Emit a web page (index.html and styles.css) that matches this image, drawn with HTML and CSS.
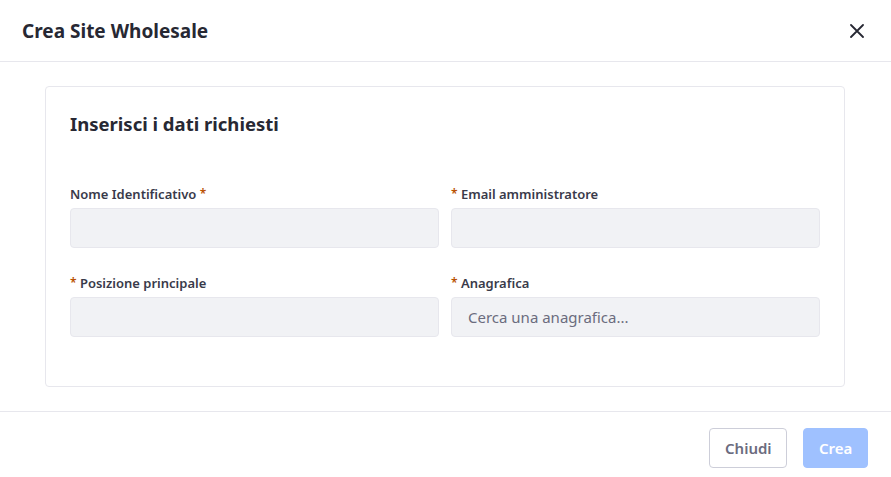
FILE: index.html
```html
<!DOCTYPE html>
<html lang="it">
<head>
<meta charset="utf-8">
<title>Crea Site Wholesale</title>
<link rel="stylesheet" href="styles.css">
</head>
<body>
<div class="modal">
  <header class="modal-header">
    <h1 class="modal-title">Crea Site Wholesale</h1>
    <button class="close" aria-label="Chiudi">
      <svg width="14" height="14" viewBox="0 0 14 14"><path d="M1 1L13 13M13 1L1 13" stroke="#272833" stroke-width="1.8" stroke-linecap="round"/></svg>
    </button>
  </header>
  <main class="modal-body">
    <section class="card">
      <h2 class="card-title">Inserisci i dati richiesti</h2>
      <div class="grid">
        <div class="field">
          <label class="label">Nome Identificativo <span class="req">*</span></label>
          <input class="input" type="text">
        </div>
        <div class="field">
          <label class="label"><span class="req">*</span> Email amministratore</label>
          <input class="input" type="text">
        </div>
        <div class="field">
          <label class="label"><span class="req">*</span> Posizione principale</label>
          <input class="input" type="text">
        </div>
        <div class="field">
          <label class="label"><span class="req">*</span> Anagrafica</label>
          <input class="input" type="text" placeholder="Cerca una anagrafica...">
        </div>
      </div>
    </section>
  </main>
  <footer class="modal-footer">
    <button class="btn btn-secondary">Chiudi</button>
    <button class="btn btn-primary" disabled>Crea</button>
  </footer>
</div>
</body>
</html>
```
FILE: styles.css
```css
* { box-sizing: border-box; }
html, body { margin: 0; padding: 0; background: #fff; }
body { font-family: "Noto Sans", "Open Sans", sans-serif; color: #272833; }
.modal { width: 891px; height: 477px; display: flex; flex-direction: column; }
.modal-header {
  height: 62px; display: flex; align-items: center; justify-content: space-between;
  padding: 0 27px 0 22px; border-bottom: 1px solid #e7e7ed;
}
.modal-title { margin: 0; font-size: 19px; font-weight: 700; color: #272833; }
.close { background: none; border: 0; padding: 0; width: 14px; height: 14px; display: flex; cursor: pointer; }
.modal-body { padding: 24px 46px 24px 45px; border-bottom: 1px solid #e7e7ed; }
.card { border: 1px solid #e7e7ed; border-radius: 4px; padding: 24px 24px 49px 24px; }
.card-title { margin: 1px 0 0 0; font-size: 18.5px; font-weight: 700; color: #272833; line-height: 24px; height: 24px; }
.grid { display: grid; grid-template-columns: 1fr 1fr; column-gap: 12px; row-gap: 25px; margin-top: 48px; }
.field { display: flex; flex-direction: column; }
.label { font-size: 13px; font-weight: 600; color: #393a4a; line-height: 20px; margin-bottom: 4px; }
.req { color: #b95000; font-size: 12px; vertical-align: top; }
.input {
  height: 40px; width: 100%; background: #f1f2f5; border: 1px solid #e7e7ed; border-radius: 4px;
  padding: 0 16px; font-family: inherit; font-size: 15px; color: #272833;
}
.input::placeholder { color: #6b6c7e; }
.modal-footer { flex: 1; display: flex; justify-content: flex-end; align-items: flex-start; gap: 16px; padding: 16px 23px 0 0; }
.btn { height: 40px; border-radius: 4px; font-family: inherit; font-size: 15px; font-weight: 600; padding: 0 15px; }
.btn-secondary { background: #fff; border: 1px solid #cdced9; color: #6b6c7e; width: 78px; }
.btn-primary { background: #9fc1ff; border: 1px solid #9fc1ff; color: #fff; width: 65px; }
```
